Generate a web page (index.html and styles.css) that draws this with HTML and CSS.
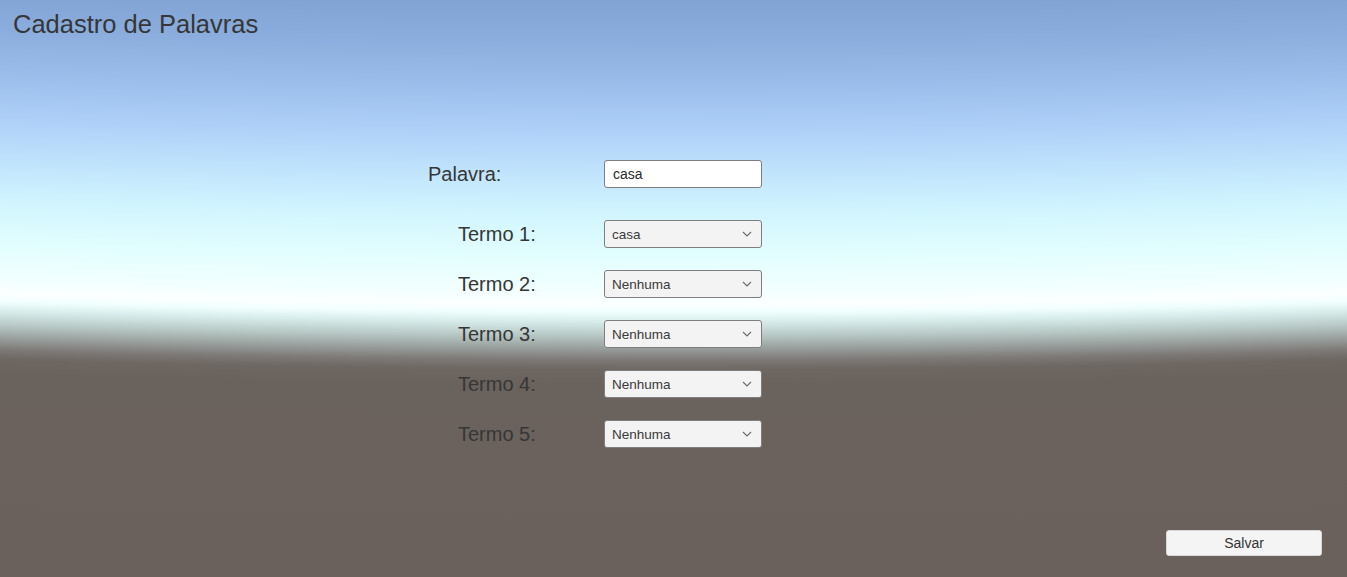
FILE: index.html
```html
<!DOCTYPE html>
<html lang="pt">
<head>
<meta charset="utf-8">
<title>Cadastro de Palavras</title>
<link rel="stylesheet" href="styles.css">
</head>
<body>
<div class="screen">
  <h1 class="title">Cadastro de Palavras</h1>
  <main class="form">
    <div class="row row-main">
      <label class="label">Palavra:</label>
      <div class="input">casa</div>
    </div>
    <div class="terms">
      <div class="row">
        <label class="label label-term">Termo 1:</label>
        <div class="select"><span>casa</span><svg class="chev" viewBox="0 0 10 6" width="10" height="6"><path d="M1 1 L5 5 L9 1" fill="none" stroke="#6a6a6a" stroke-width="1.1"/></svg></div>
      </div>
      <div class="row">
        <label class="label label-term">Termo 2:</label>
        <div class="select"><span>Nenhuma</span><svg class="chev" viewBox="0 0 10 6" width="10" height="6"><path d="M1 1 L5 5 L9 1" fill="none" stroke="#6a6a6a" stroke-width="1.1"/></svg></div>
      </div>
      <div class="row">
        <label class="label label-term">Termo 3:</label>
        <div class="select"><span>Nenhuma</span><svg class="chev" viewBox="0 0 10 6" width="10" height="6"><path d="M1 1 L5 5 L9 1" fill="none" stroke="#6a6a6a" stroke-width="1.1"/></svg></div>
      </div>
      <div class="row">
        <label class="label label-term">Termo 4:</label>
        <div class="select"><span>Nenhuma</span><svg class="chev" viewBox="0 0 10 6" width="10" height="6"><path d="M1 1 L5 5 L9 1" fill="none" stroke="#6a6a6a" stroke-width="1.1"/></svg></div>
      </div>
      <div class="row">
        <label class="label label-term">Termo 5:</label>
        <div class="select"><span>Nenhuma</span><svg class="chev" viewBox="0 0 10 6" width="10" height="6"><path d="M1 1 L5 5 L9 1" fill="none" stroke="#6a6a6a" stroke-width="1.1"/></svg></div>
      </div>
    </div>
  </main>
  <footer class="actions">
    <button class="btn">Salvar</button>
  </footer>
</div>
</body>
</html>
```

FILE: styles.css
```css
* { box-sizing: border-box; }
html, body { margin: 0; padding: 0; }
body {
  font-family: "Liberation Sans", Arial, sans-serif;
  color: #323232;
  overflow: hidden;
}
.screen {
  width: 1347px;
  height: 577px;
  display: flex;
  flex-direction: column;
  background:
    radial-gradient(circle at 50% -22000px,
      #80a3d3 22000px,
      #8aaddd 22040px,
      #9cbfec 22090px,
      #aed0f8 22130px,
      #bfe2fc 22170px,
      #d0f4fe 22210px,
      #e2fefe 22255px,
      #f2ffff 22290px,
      #fcffff 22304px,
      #f0fffe 22312px,
      #d6ecea 22322px,
      #b6c6c3 22336px,
      #979d9b 22349px,
      #7d7977 22360px,
      #6d6661 22370px,
      #6a625d 22385px,
      #6b615c 22577px,
      #6b615c 22700px);
}
.title {
  margin: 0;
  padding: 9px 0 0 13px;
  font-size: 25.5px;
  font-weight: normal;
  line-height: 30px;
  color: #363636;
}
.form {
  margin: 0 0 0 428px;
  padding-top: 121px;
  display: flex;
  flex-direction: column;
  gap: 32px;
}
.terms {
  display: flex;
  flex-direction: column;
  gap: 22px;
}
.row {
  display: flex;
  align-items: center;
  height: 28px;
}
.label {
  width: 176px;
  font-size: 20px;
  line-height: 24px;
  color: #363636;
}
.label-term { padding-left: 30px; }
.input {
  width: 158px;
  height: 28px;
  background: #fff;
  border: 1px solid #7e7e7e;
  border-radius: 3px;
  padding: 0 8px;
  font-size: 14px;
  line-height: 26px;
  color: #2a2a2a;
}
.select {
  width: 158px;
  height: 28px;
  background: #f3f3f3;
  border: 1px solid #7e7e7e;
  border-radius: 3px;
  padding: 0 9px 0 7px;
  display: flex;
  align-items: center;
  justify-content: space-between;
  font-size: 13.5px;
  color: #3a3a3a;
}
.chev { display: block; }
.actions {
  margin-top: auto;
  display: flex;
  justify-content: flex-end;
  padding: 0 25px 21px 0;
}
.btn {
  width: 156px;
  height: 26px;
  background: #f4f4f4;
  border: 1px solid #d8d8d8;
  border-radius: 3px;
  font-family: "Liberation Sans", Arial, sans-serif;
  font-size: 14px;
  color: #333;
  padding: 0;
}
```
